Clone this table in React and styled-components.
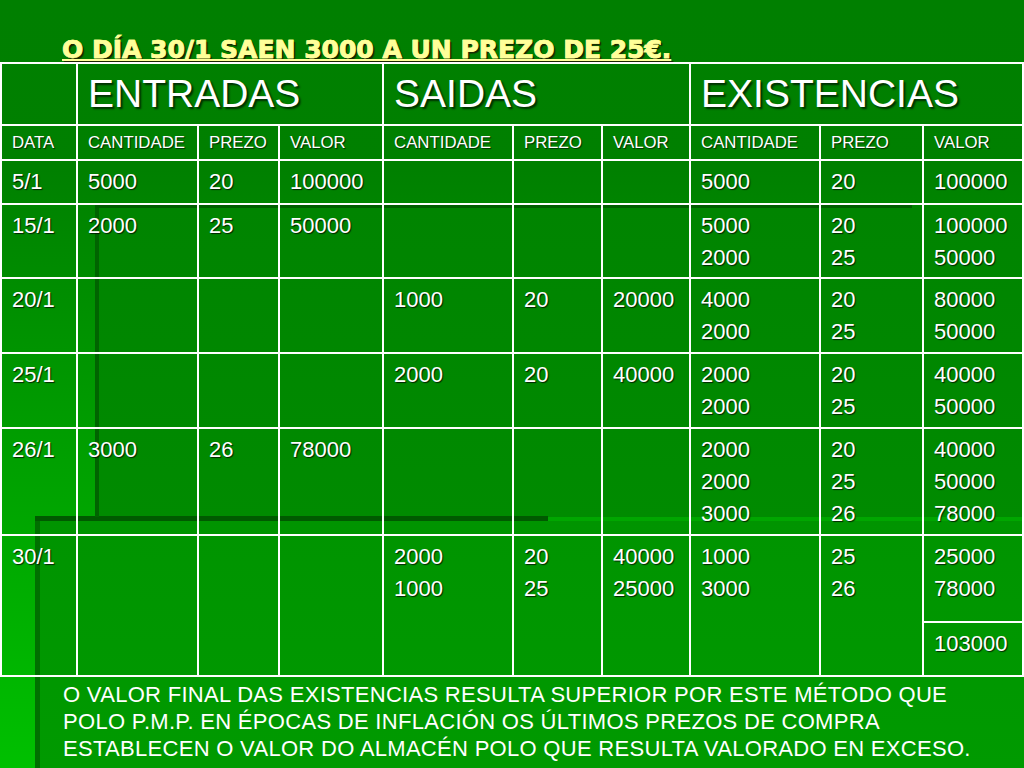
import React from 'react';
import styled, { createGlobalStyle } from 'styled-components';

const GlobalStyle = createGlobalStyle`
  html, body {
    margin: 0;
    padding: 0;
    background: #008000;
  }
`;

const Slide = styled.div`
  width: 1024px;
  height: 768px;
  overflow: hidden;
  display: flex;
  flex-direction: column;
  font-family: "Liberation Sans", Arial, sans-serif;
  color: #fff;
  background:
    linear-gradient(#005f00, #005f00) 95px 204px / 817px 4px no-repeat,
    linear-gradient(#006400, #006400) 95px 204px / 4px 313px no-repeat,
    linear-gradient(#005a00, #005a00) 35px 516px / 513px 5px no-repeat,
    linear-gradient(#007000, #007000) 35px 516px / 5px 252px no-repeat,
    linear-gradient(180deg, #009400, #009a00) 40px 521px / 984px 247px no-repeat,
    linear-gradient(180deg, #008400, #008b00) 99px 208px / 925px 309px no-repeat,
    linear-gradient(180deg, #007f00 0%, #008000 22%, #009c00 55%, #00b000 80%, #00c000 100%);
`;

const Title = styled.h1`
  margin: 0;
  height: 62px;
  padding-left: 62px;
  box-sizing: border-box;
  display: flex;
  align-items: flex-end;
  font-family: "DejaVu Sans", Verdana, sans-serif;
  font-weight: 900;
  font-size: 25px;
  line-height: 24px;
  color: #ffff99;
  text-decoration: underline;
  text-decoration-thickness: 2px;
  text-underline-offset: 1px;
  -webkit-text-stroke: 0.6px #ffff99;
  text-shadow: 2px 2px 1px rgba(30, 25, 0, 0.85);
`;

const Table = styled.table`
  border-collapse: collapse;
  table-layout: fixed;
  width: 1022px;
`;

const Row = styled.tr`
  height: ${p => p.h}px;
`;

const Cell = styled.td`
  border: 2px solid #fff;
  padding: 5px 6px 0 10px;
  vertical-align: top;
  font-size: 22px;
  line-height: 32px;
  white-space: nowrap;
  text-shadow: 1px 1px 1px rgba(0, 0, 0, 0.75);
`;

const GroupHead = styled.th`
  border: 2px solid #fff;
  padding: 0 6px 0 10px;
  text-align: left;
  vertical-align: middle;
  font-weight: normal;
  font-size: 39px;
  line-height: 44px;
  text-shadow: 2px 2px 2px rgba(0, 0, 0, 0.65);
`;

const SubHead = styled.th`
  border: 2px solid #fff;
  padding: 0 6px 0 10px;
  text-align: left;
  vertical-align: middle;
  font-weight: normal;
  font-size: 16.8px;
  white-space: nowrap;
  text-shadow: 1px 1px 1px rgba(0, 0, 0, 0.65);
`;

const Line = styled.div``;

const Footer = styled.p`
  margin: 0;
  padding: 4px 0 0 63px;
  font-size: 22px;
  letter-spacing: 0.3px;
  line-height: 27px;
  color: #fff;
`;

const widths = [76, 121, 81, 104, 130, 89, 88, 130, 103, 100];

const rows = [
  { h: 44, cells: ['5/1', ['5000'], ['20'], ['100000'], [], [], [], ['5000'], ['20'], ['100000']] },
  { h: 74, cells: ['15/1', ['2000'], ['25'], ['50000'], [], [], [], ['5000', '2000'], ['20', '25'], ['100000', '50000']] },
  { h: 75, cells: ['20/1', [], [], [], ['1000'], ['20'], ['20000'], ['4000', '2000'], ['20', '25'], ['80000', '50000']] },
  { h: 75, cells: ['25/1', [], [], [], ['2000'], ['20'], ['40000'], ['2000', '2000'], ['20', '25'], ['40000', '50000']] },
  { h: 107, cells: ['26/1', ['3000'], ['26'], ['78000'], [], [], [], ['2000', '2000', '3000'], ['20', '25', '26'], ['40000', '50000', '78000']] },
];

const lastRow = ['30/1', [], [], [], ['2000', '1000'], ['20', '25'], ['40000', '25000'], ['1000', '3000'], ['25', '26'], ['25000', '78000']];

const Lines = ({ items }) => (
  <>
    {items.map((t, i) => <Line key={i}>{t}</Line>)}
  </>
);

const sub = ['DATA', 'CANTIDADE', 'PREZO', 'VALOR', 'CANTIDADE', 'PREZO', 'VALOR', 'CANTIDADE', 'PREZO', 'VALOR'];

const App = () => (
  <>
    <GlobalStyle />
    <Slide>
      <Title>O DÍA 30/1 SAEN 3000 A UN PREZO DE 25€.</Title>
      <Table>
        <colgroup>
          {widths.map((w, i) => <col key={i} style={{ width: w }} />)}
        </colgroup>
        <thead>
          <Row h={62}>
            <GroupHead />
            <GroupHead colSpan={3}>ENTRADAS</GroupHead>
            <GroupHead colSpan={3}>SAIDAS</GroupHead>
            <GroupHead colSpan={3}>EXISTENCIAS</GroupHead>
          </Row>
          <Row h={35}>
            {sub.map((s, i) => <SubHead key={i}>{s}</SubHead>)}
          </Row>
        </thead>
        <tbody>
          {rows.map((r, i) => (
            <Row key={i} h={r.h}>
              <Cell>{r.cells[0]}</Cell>
              {r.cells.slice(1).map((c, j) => (
                <Cell key={j}><Lines items={c} /></Cell>
              ))}
            </Row>
          ))}
          <Row h={87}>
            <Cell rowSpan={2}>{lastRow[0]}</Cell>
            {lastRow.slice(1, 9).map((c, j) => (
              <Cell key={j} rowSpan={2}><Lines items={c} /></Cell>
            ))}
            <Cell><Lines items={lastRow[9]} /></Cell>
          </Row>
          <Row h={54}>
            <Cell>103000</Cell>
          </Row>
        </tbody>
      </Table>
      <Footer>
        O VALOR FINAL DAS EXISTENCIAS RESULTA SUPERIOR POR ESTE MÉTODO QUE<br />
        POLO P.M.P. EN ÉPOCAS DE INFLACIÓN OS ÚLTIMOS PREZOS DE COMPRA<br />
        ESTABLECEN O VALOR DO ALMACÉN POLO QUE RESULTA VALORADO EN EXCESO.
      </Footer>
    </Slide>
  </>
);

export default App;
